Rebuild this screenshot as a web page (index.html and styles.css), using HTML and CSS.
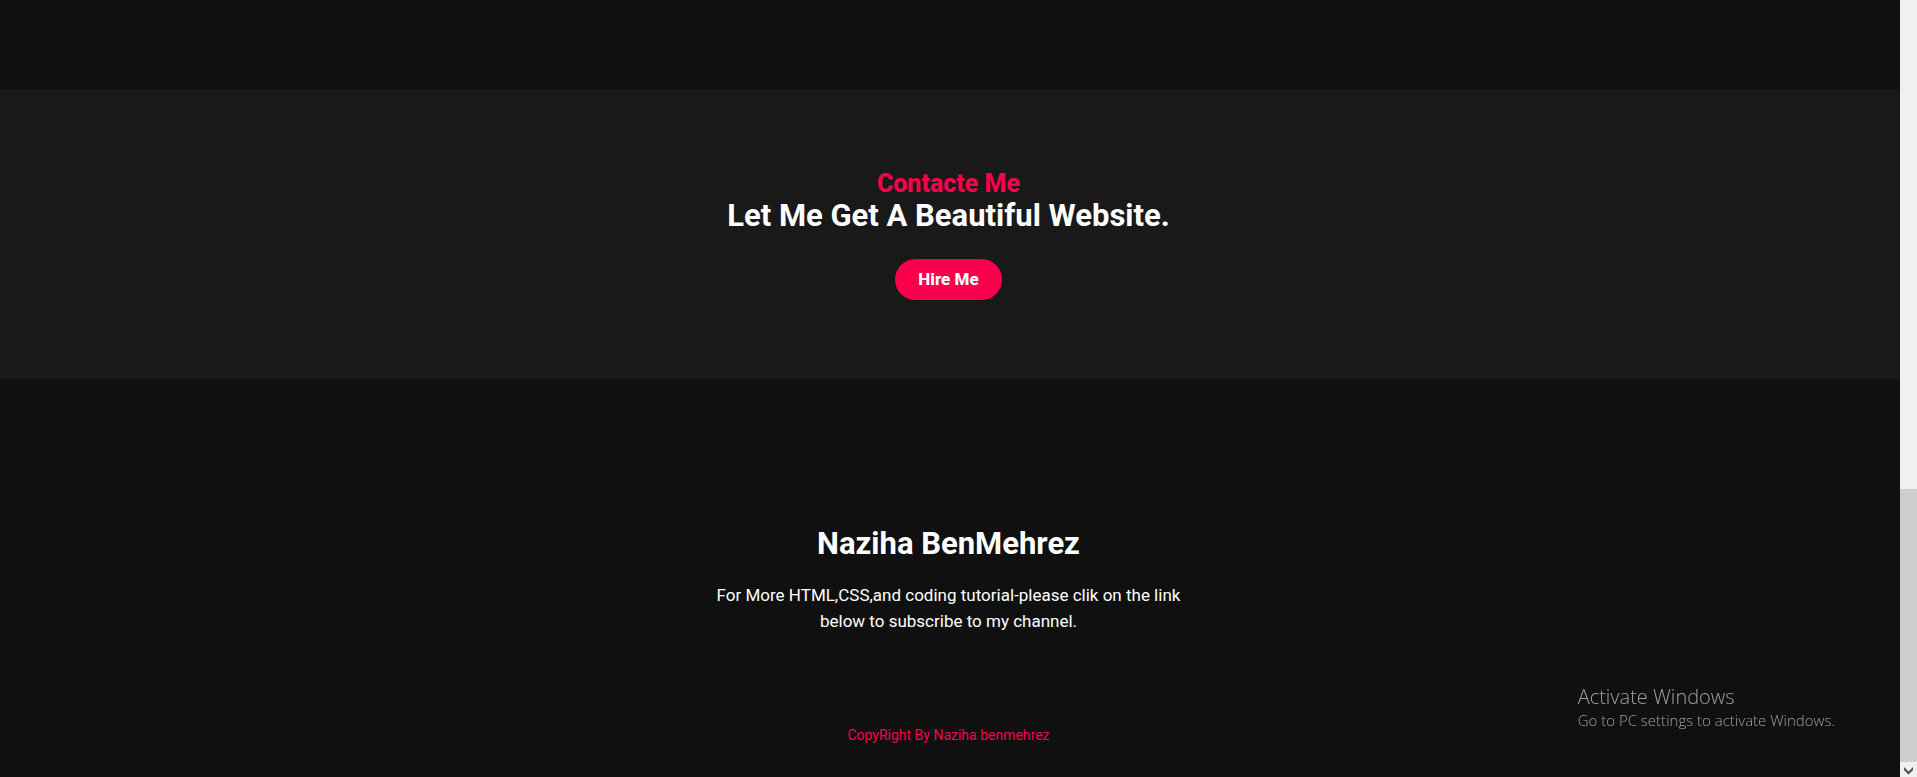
FILE: index.html
```html
<!DOCTYPE html>
<html lang="en">
<head>
<meta charset="utf-8">
<title>Naziha BenMehrez</title>
<link rel="stylesheet" href="styles.css">
</head>
<body>
<div class="page">
  <main class="content">
    <section class="contact">
      <p class="contact-label">Contacte Me</p>
      <h2 class="title">Let Me Get A Beautiful Website.</h2>
      <button class="hire" type="button">Hire Me</button>
    </section>
    <footer class="footer">
      <h2 class="title">Naziha BenMehrez</h2>
      <p class="footer-text">For More HTML,CSS,and coding tutorial-please clik on the link below to subscribe to my channel.</p>
      <p class="copyright">CopyRight By Naziha benmehrez</p>
    </footer>
  </main>
  <div class="scrollbar" aria-hidden="true">
    <div class="thumb"></div>
    <svg class="arrow" viewBox="0 0 17 15" width="17" height="15"><path d="M4 5v3l4.500 4.500L13 8V5L8.500 9.500z" fill="#505050"/></svg>
  </div>
</div>
<aside class="activation">
  <p class="activation-title">Activate Windows</p>
  <p class="activation-text">Go to PC settings to activate Windows.</p>
</aside>
</body>
</html>
```
FILE: styles.css
```css
* {
  box-sizing: border-box;
  margin: 0;
  padding: 0;
}

body {
  background: #101010;
  color: #fff;
  font-family: Roboto, "Liberation Sans", sans-serif;
}

.page {
  display: flex;
  min-height: 100vh;
}

.content {
  flex: 1;
  padding-top: 89px;
}

.contact {
  display: flex;
  flex-direction: column;
  align-items: center;
  padding: 80px 3px 79px 0;
  background: #191919;
}

.contact-label {
  color: #f9004d;
  font-size: 25px;
  font-weight: 800;
  line-height: 29px;
}

.title {
  font-size: 31px;
  font-weight: 700;
  line-height: 36px;
}

.hire {
  margin-top: 25px;
  padding: 10px 23px;
  border: 0;
  border-radius: 30px;
  background: #f9004d;
  color: #fff;
  font: 800 17px/21px Roboto, "Liberation Sans", sans-serif;
}

.footer {
  display: flex;
  flex-direction: column;
  align-items: center;
  padding: 147px 3px 32px 0;
  text-align: center;
}

.footer-text {
  max-width: 500px;
  margin-top: 20px;
  font-size: 17px;
  line-height: 26px;
}

.copyright {
  margin-top: 92px;
  color: #f9004d;
  font-size: 14px;
  line-height: 18px;
}

.scrollbar {
  display: flex;
  flex-direction: column;
  width: 17px;
  padding-top: 489px;
  background: #f0f0f0;
}

.thumb {
  flex: 1;
  background: #cdcdcd;
}

.arrow {
  display: block;
}

.activation {
  position: fixed;
  right: 82px;
  bottom: 47px;
  color: #a0a0a0;
  font-family: "Open Sans", "Noto Sans", sans-serif;
  font-weight: 300;
}

.activation-title {
  font-size: 20px;
  line-height: 26px;
}

.activation-text {
  font-size: 15px;
  line-height: 20px;
}
```
